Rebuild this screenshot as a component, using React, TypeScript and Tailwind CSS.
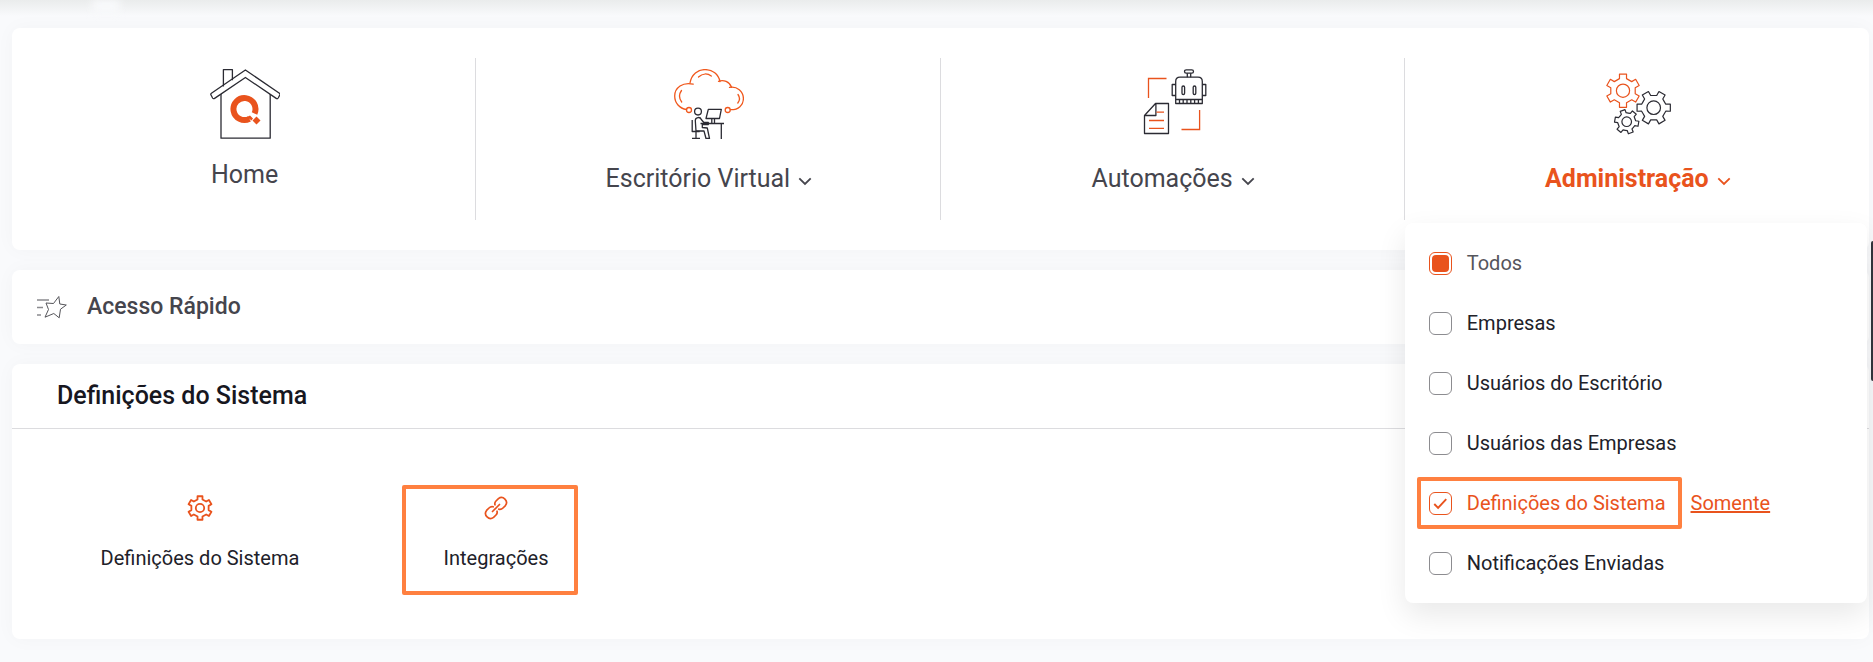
import { useState } from "react";
import type { ReactNode } from "react";
import clsx from "clsx";

const gearPath = (
  cx: number,
  cy: number,
  r: number,
  teeth: number,
  rotation: number
) => {
  const step = 360 / teeth;
  const inner = r * 0.74;
  const points: string[] = [];
  for (let i = 0; i < teeth; i++) {
    const base = rotation + i * step;
    const corners = [
      [inner, -step * 0.27],
      [r, -step * 0.2],
      [r, step * 0.2],
      [inner, step * 0.27],
      [inner * 0.97, step * 0.5],
    ];
    corners.forEach(([radius, offset]) => {
      const angle = ((base + offset) * Math.PI) / 180;
      points.push(
        `${(cx + radius * Math.cos(angle)).toFixed(2)} ${(
          cy +
          radius * Math.sin(angle)
        ).toFixed(2)}`
      );
    });
  }
  return `M${points.join("L")}Z`;
};

const HomeIcon = () => (
  <svg viewBox="0 0 70 70" className="size-[70px]" fill="none" aria-hidden="true">
    <g stroke="#2b2b33" strokeWidth="1.3" strokeLinejoin="round">
      <path d="M13.4 17.5V.7h9v10.5" />
      <path d="M11 25v44.2h49.2V25" />
      <path d="M35.4 1 1.4 24.2q-1 .8-.4 1.8l1.6 3q.8 1.2 2 .4L35.4 8.5l30.8 20.9q1.2.8 2-.4l1.6-3q.6-1-.4-1.8Z" />
    </g>
    <path
      d="M39.500 49.800A11 11 0 1 1 44.500 44.500"
      stroke="#e9531d"
      strokeWidth="6"
    />
    <path d="m46.500 47.500 4 4-4 4-4-4ZM37 48l3-1.500 3 3-1.500 2Z" fill="#e9531d" />
  </svg>
);

const OfficeIcon = () => (
  <svg viewBox="0 0 70 70" className="size-[70px]" fill="none" aria-hidden="true">
    <g stroke="#f0581d" strokeWidth="1.3" strokeLinecap="round">
      <path d="M12.500 40.500C5.500 39.500.7 34 .7 27c0-8 8-14.500 18.500-11.800" />
      <path d="M16 14C17.500 5.500 24 .6 31 .6c7.500 0 13.500 4.600 15 12" />
      <path d="M44.500 12.300c5-1.800 11 .2 13 6" />
      <path d="M55.500 18.300c7.500-1.500 13.900 4 13.900 11.200 0 6.500-5 11.500-13 11.200" />
      <path d="M7.500 21.500c-2.500 3.500-2.500 8 .2 11.500M24.500 8c4-3.800 9-3.800 12.800-1M64 25.500c2 2.800 1.800 6-.2 8.500" />
      <circle cx="15" cy="41" r="2.500" />
      <circle cx="53.700" cy="41" r="2.500" />
    </g>
    <g stroke="#2b2b33" strokeWidth="1.300" strokeLinejoin="round">
      <circle cx="24" cy="42.600" r="3.400" />
      <path d="M34.300 40.300h13l-1.800 9.200H32ZM37.800 50v4.500M40.500 50v4.500M26.500 54.500h23.500M47.300 55v15" />
      <path d="M21.300 51.500c0-3.500 5-4 6-1l2.500 3h4.500v2h-6v3l5 .5 2.200 10.500h-3.500l-2-7.500h-8Z" />
      <path d="M18.200 51v11.500h7.500M22 63v6M18 69.400h8" />
    </g>
  </svg>
);

const AutomationIcon = () => (
  <svg viewBox="0 0 70 70" className="size-[70px]" fill="none" aria-hidden="true">
    <path
      d="M10.500 29V9.500h18M61.600 41v19.500H43.500"
      stroke="#e9531d"
      strokeWidth="1.300"
    />
    <g stroke="#2b2b33" strokeWidth="1.300" strokeLinejoin="round">
      <rect x="46.500" y=".8" width="9" height="3.400" rx="1.700" />
      <path d="M49.300 4.200v4M52.700 4.200v4" />
      <path d="M37.700 34.500V12.500q0-4.300 4.300-4.300h18q4.300 0 4.300 4.300v22ZM37.700 30.500h26.600" />
      <path d="M41.500 30.500v4M45.200 30.500v4M49 30.500v4M52.800 30.500v4M56.600 30.500v4M60.400 30.500v4" />
      <path d="M37.700 15.500h-3.500v11h3.500M64.300 15.500h3.500v11h-3.500" />
      <rect x="44" y="17" width="2.600" height="8.500" rx="1.300" />
      <rect x="55.200" y="17" width="2.600" height="8.500" rx="1.300" />
      <path d="M17.500 34.500h13v30H6.500V46.500ZM17.900 34.500v12H6.500" />
    </g>
    <path
      d="M18.500 43.200H26M11 51.500h15M11 59.300h15"
      stroke="#e9531d"
      strokeWidth="1.300"
    />
  </svg>
);

const AdminIcon = () => (
  <svg viewBox="0 0 70 70" className="size-[70px]" fill="none" aria-hidden="true">
    <g stroke="#e9531d" strokeWidth="1.200" strokeLinejoin="round">
      <path d={gearPath(20, 21.7, 17, 6, 30)} />
      <circle cx="20" cy="21.700" r="6.600" />
    </g>
    <g stroke="#2b2b33" strokeWidth="1.200" strokeLinejoin="round">
      <path d={gearPath(50.7, 38.7, 17, 6, 0)} />
      <circle cx="50.700" cy="38.700" r="6.800" />
      <path d={gearPath(23.7, 52.7, 12.2, 6, 10)} />
      <circle cx="23.700" cy="52.700" r="4.800" />
    </g>
  </svg>
);

const ChevronIcon = () => (
  <svg
    viewBox="0 0 14 14"
    className="mt-1 size-[14px]"
    fill="none"
    stroke="currentColor"
    strokeWidth="1.800"
    aria-hidden="true"
  >
    <path d="m1.300 4.300 5.700 5.700 5.700-5.700" />
  </svg>
);

const QuickAccessIcon = () => (
  <svg viewBox="0 0 30 24" className="h-6 w-[30px]" fill="none" aria-hidden="true">
    <path d="M0 5h12M0 12.500h6M0 20h4" stroke="#8a8a8e" strokeWidth="1.500" />
    <path
      d="m21.800 1.500 1 7.500 6.500 1-5.800 4.200-1.300 8.600-5.400-4.300-8.800 3.700 3.500-7.700L9 8l7.500.5Z"
      stroke="#55555a"
      strokeWidth="1"
    />
  </svg>
);

const SettingsIcon = () => (
  <svg
    viewBox="0 0 26 26"
    className="size-[26px]"
    fill="none"
    stroke="#e9531d"
    strokeWidth="1.800"
    strokeLinejoin="round"
    aria-hidden="true"
  >
    <path d={gearPath(13, 13, 12, 6, 30)} />
    <circle cx="13" cy="13" r="4.200" />
  </svg>
);

const LinkIcon = () => (
  <svg
    viewBox="0 0 26 26"
    className="size-[26px]"
    fill="none"
    stroke="#e9531d"
    strokeWidth="1.700"
    strokeLinecap="round"
    aria-hidden="true"
  >
    <path d="m9.500 16.500 7-7" />
    <path d="M12 9.800c-.5-1.500 0-2.800 1-3.800l2.400-2.400a5 5 0 0 1 7 7L20 13c-1.200 1.200-2.700 1.600-4.200 1.200" />
    <path d="M10.200 11.800c-1.500-.4-3 0-4.200 1.200l-2.400 2.400a5 5 0 0 0 7 7L13 20c1-1 1.500-2.300 1-3.800" />
  </svg>
);

const NavItem = ({
  label,
  icon,
  active,
  hasMenu = true,
  children,
}: {
  label: string;
  icon: ReactNode;
  active?: boolean;
  hasMenu?: boolean;
  children?: ReactNode;
}) => (
  <li className="relative h-[162px] border-r border-[#dcdcdf] last:border-r-0">
    <button
      type="button"
      aria-expanded={hasMenu ? !!children : undefined}
      className={clsx(
        "flex w-full cursor-pointer flex-col items-center pt-[11px] pl-0.5 text-[25px] leading-8",
        hasMenu ? "gap-6" : "gap-5",
        active ? "font-bold text-[#e9531d]" : "text-[#45454d]"
      )}
    >
      {icon}
      <span className="flex items-center gap-2">
        {label}
        {hasMenu && <ChevronIcon />}
      </span>
    </button>
    {children}
  </li>
);

const FilterOption = ({
  id,
  label,
  checked,
  partial,
  onChange,
}: {
  id: string;
  label: string;
  checked: boolean;
  partial?: boolean;
  onChange: () => void;
}) => (
  <div className="flex items-center">
    <span className="relative size-[23px]">
      <input
        id={id}
        type="checkbox"
        checked={checked}
        onChange={onChange}
        className={clsx(
          "block size-[23px] cursor-pointer appearance-none rounded-md border bg-white",
          checked || partial ? "border-[#e9531d]" : "border-[#8c8c90]"
        )}
      />
      {partial && (
        <span className="pointer-events-none absolute inset-[3px] rounded bg-[#e9531d]" />
      )}
      {checked && !partial && (
        <svg
          viewBox="0 0 24 24"
          className="pointer-events-none absolute inset-0"
          fill="none"
          stroke="#e9531d"
          strokeWidth="2"
          aria-hidden="true"
        >
          <path d="m5.500 12.500 4 4 8.500-9" />
        </svg>
      )}
    </span>
    <label
      htmlFor={id}
      className={clsx(
        "cursor-pointer pl-[15px]",
        partial ? "text-[#55555c]" : checked ? "text-[#e9531d]" : "text-[#212129]"
      )}
    >
      {label}
    </label>
  </div>
);

const OPTIONS = [
  "Empresas",
  "Usuários do Escritório",
  "Usuários das Empresas",
  "Definições do Sistema",
  "Notificações Enviadas",
];

const AdminMenu = () => {
  const [selected, setSelected] = useState(["Definições do Sistema"]);
  const all = selected.length === OPTIONS.length;

  const toggle = (option: string) =>
    setSelected((prev) =>
      prev.includes(option)
        ? prev.filter((item) => item !== option)
        : [...prev, option]
    );

  return (
    <ul className="absolute inset-x-0 top-full z-10 mt-[3px] mr-0.5 rounded-lg bg-white px-3 py-2.5 text-xl shadow-[0_12px_30px_rgba(0,0,0,0.09)]">
      <li className="flex h-[60px] items-center pl-3">
        <FilterOption
          id="todos"
          label="Todos"
          checked={all}
          partial={selected.length > 0 && !all}
          onChange={() => setSelected(all ? [] : OPTIONS)}
        />
      </li>
      {OPTIONS.map((option) => {
        const checked = selected.includes(option);
        return (
          <li key={option} className="flex h-[60px] items-center gap-[9px]">
            <div
              className={clsx(
                "rounded-xs border-4 py-2 pr-3 pl-2",
                checked ? "border-[#ff8040]" : "border-transparent"
              )}
            >
              <FilterOption
                id={option}
                label={option}
                checked={checked}
                onChange={() => toggle(option)}
              />
            </div>
            {checked && (
              <a href="#somente" className="text-[#e9531d] underline">
                Somente
              </a>
            )}
          </li>
        );
      })}
    </ul>
  );
};

const Tile = ({
  label,
  icon,
  highlighted,
}: {
  label: string;
  icon: ReactNode;
  highlighted?: boolean;
}) => (
  <li className="flex w-[296px] justify-center">
    <a
      href="#abrir"
      className={clsx(
        "mr-3 flex h-[110px] min-w-[176px] flex-col items-center gap-[23px] rounded-xs border-4 pt-[6px] pl-3 text-xl whitespace-nowrap text-[#212129]",
        highlighted ? "border-[#ff8040]" : "border-transparent"
      )}
    >
      {icon}
      {label}
    </a>
  </li>
);

const CARD = "rounded-lg bg-white shadow-[0_0_20px_rgba(0,0,0,0.03)]";

const App = () => {
  return (
    <div className="relative min-h-screen bg-[#f9fafc] pt-7 pr-1 pb-5 pl-3 font-['Roboto',sans-serif]">
      <div className="absolute inset-x-0 top-0 h-4 bg-linear-to-b from-[#eaecec] to-[#f9fafc]" />
      {/* notch in the header shadow */}
      <div className="absolute top-0 left-[92px] h-3 w-7 bg-[#f9fafc] blur-[4px]" />
      <div className="absolute top-[241px] right-0 h-[140px] w-0.5 rounded-l-full bg-[#33363d]" />
      <main className="flex flex-col gap-5">
        <nav className={clsx(CARD, "relative z-10 py-[30px]")}>
          <ul className="grid grid-cols-4">
            <NavItem label="Home" icon={<HomeIcon />} hasMenu={false} />
            <NavItem label="Escritório Virtual" icon={<OfficeIcon />} />
            <NavItem label="Automações" icon={<AutomationIcon />} />
            <NavItem label="Administração" icon={<AdminIcon />} active>
              <AdminMenu />
            </NavItem>
          </ul>
        </nav>

        <section className={clsx(CARD, "flex h-[74px] items-center gap-5 pl-[25px]")}>
          <QuickAccessIcon />
          <h2 className="text-[23px] leading-8 font-medium text-[#45454d]">
            Acesso Rápido
          </h2>
        </section>

        <section className={CARD}>
          <h2 className="border-b border-[#dcdcdf] py-4 pl-[45px] text-[25px] leading-8 font-medium text-[#17171f]">
            Definições do Sistema
          </h2>
          <ul className="flex px-10 pt-14 pb-11">
            <Tile label="Definições do Sistema" icon={<SettingsIcon />} />
            <Tile label="Integrações" icon={<LinkIcon />} highlighted />
          </ul>
        </section>
      </main>
    </div>
  );
};

export default App;
